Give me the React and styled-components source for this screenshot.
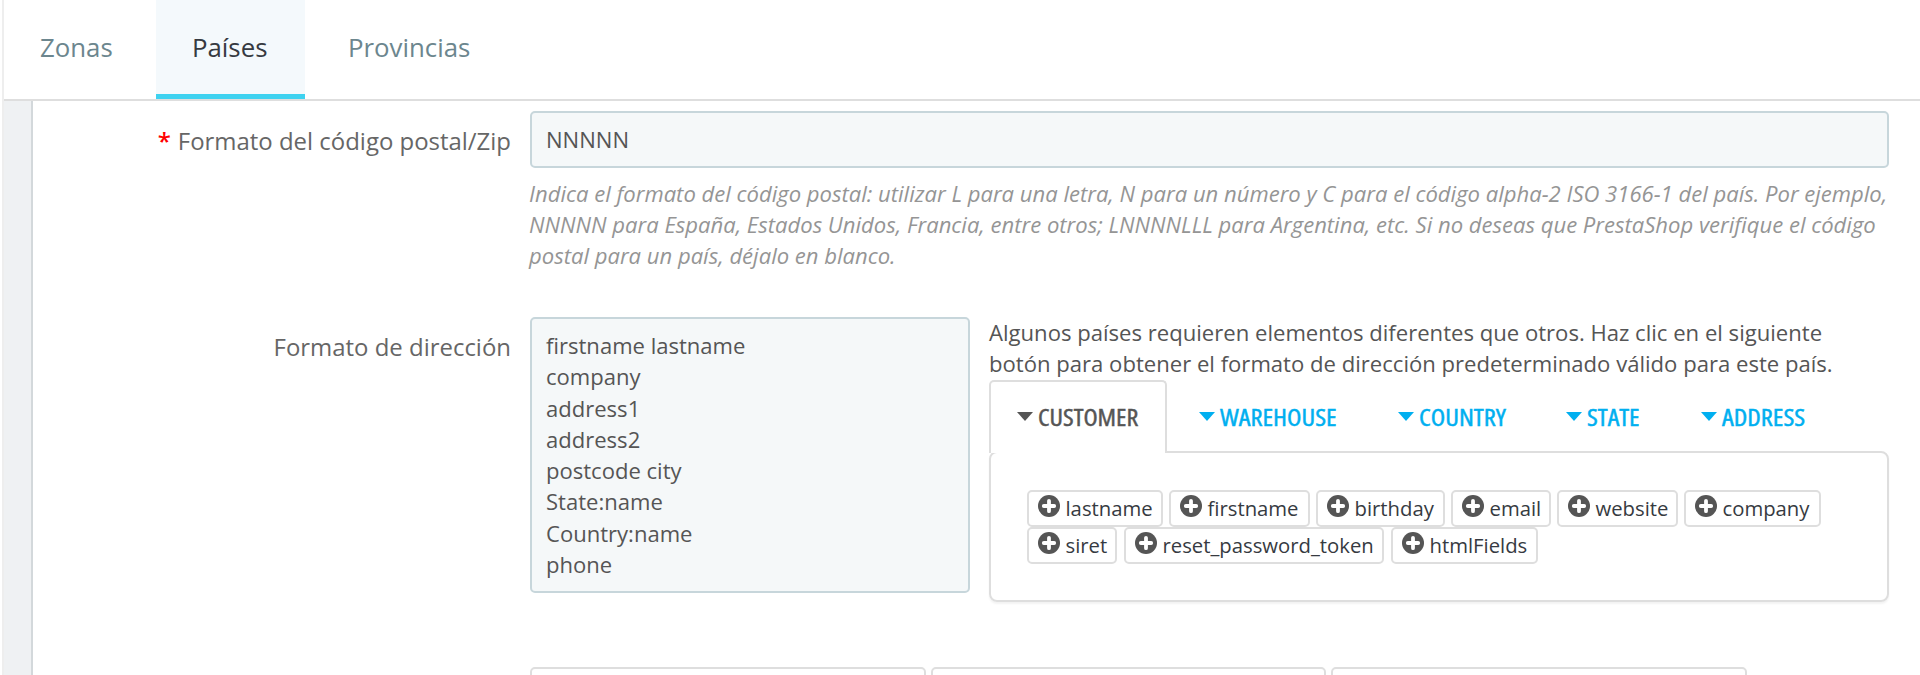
import React from "react";
import styled, { createGlobalStyle } from "styled-components";

const GlobalStyle = createGlobalStyle`
    * {
        box-sizing: border-box;
    }
    body {
        margin: 0;
        background: #fff;
        color: #555;
        font: 22.05px/31.25px "Open Sans", sans-serif;
    }
`

const Page = styled.div`
    display: flex;
    flex-direction: column;
    height: 675px;
    margin-left: 2px;
    border-left: 2px solid #eee;
    overflow: hidden;
`

const HeadTabs = styled.nav`
    display: flex;
    flex: none;
    gap: 7px;
    height: 101px;
    border-bottom: 2px solid #dedede;
`

const HeadTab = styled.a`
    padding: 29px 36px 0;
    width: ${props => props.$width}px;
    font-size: 25.8px;
    line-height: 37px;
    white-space: nowrap;
    color: ${props => props.$active ? "#363a41" : "#6c868e"};
    background: ${props => props.$active ? "#f4f9fc" : "transparent"};
    border-bottom: 5px solid ${props => props.$active ? "#3ed2f0" : "transparent"};
`

const Content = styled.div`
    flex: 1;
    padding-left: 27px;
    background: #eff1f3;
    overflow: hidden;
`

const Form = styled.div`
    height: 100%;
    padding: 10px 31px 0 0;
    background: #fff;
    border-left: 2px solid #d3d8db;
`

const Row = styled.div`
    display: flex;
    height: ${props => props.$height}px;
`

const Label = styled.label`
    width: 497px;
    padding: 13px 19px 0 0;
    font-size: 23.95px;
    line-height: 34px;
    text-align: right;
    white-space: nowrap;
    color: #666;
`

const Required = styled.span`
    margin-right: 7px;
    color: #f00;
    font-weight: 600;
`

const Field = styled.div`
    width: 1359px;
`

const TextInput = styled.input`
    display: block;
    width: 100%;
    height: 57px;
    padding: 0 14px 1px;
    border: 2px solid #c7d6db;
    border-radius: 5px;
    background: #f5f8f9;
    color: #555;
    font: inherit;
    outline: none;
`

const Help = styled.p`
    margin: 9.5px 0 0 -1px;
    font-style: italic;
    white-space: nowrap;
    color: #959595;
`

const AddressFields = styled.div`
    display: flex;
    gap: 19px;
    width: 1359px;
`

const TextArea = styled.textarea`
    display: block;
    width: 440px;
    height: 276px;
    padding: 11px 14px;
    border: 2px solid #c7d6db;
    border-radius: 5px;
    background: #f5f8f9;
    color: #555;
    font: inherit;
    resize: none;
    outline: none;
    overflow: hidden;
`

const Layout = styled.div`
    width: 900px;
`

const Intro = styled.p`
    margin: 0;
    font-size: 22.1px;
    white-space: nowrap;
`

const ObjectTabs = styled.div`
    display: flex;
    gap: 4px;
    height: 73px;
    margin-bottom: -2px;
`

const ObjectTab = styled.a`
    display: flex;
    align-items: center;
    width: ${props => props.$width}px;
    padding: 0 0 1px 26px;
    border: 2px solid ${props => props.$active ? "#dedede" : "transparent"};
    border-bottom: 0;
    border-radius: 5px 5px 0 0;
    background: ${props => props.$active ? "#fff" : "transparent"};
    color: ${props => props.$active ? "#555" : "#00aff0"};
    position: relative;
`

const Caret = styled.span`
    flex: none;
    width: 16px;
    height: 9px;
    margin: 0 4.5px 0 0;
    background: currentColor;
    clip-path: polygon(0 0, 100% 0, 50% 100%);
`

const TabText = styled.span`
    font: 500 24.3px/30px "Open Sans", sans-serif;
    font-stretch: 75%;
    -webkit-text-stroke: 0.45px currentColor;
    transform: scaleX(${props => props.$stretch});
    transform-origin: left;
    white-space: nowrap;
`

const TabPanel = styled.div`
    display: flex;
    flex-direction: column;
    height: 151px;
    padding: 37px 36px 0;
    border: 2px solid #dedede;
    border-radius: 8px;
    box-shadow: 0 2px 2px rgba(0, 0, 0, 0.05);
`

const ChipRow = styled.div`
    display: flex;
    gap: ${props => props.$gap}px;
    height: 37px;
`

const Chip = styled.button`
    display: flex;
    align-items: center;
    width: ${props => props.$width}px;
    height: 37px;
    padding: 0 0 0 9px;
    border: 2px solid #dedede;
    border-radius: 5px;
    background: #fff;
    color: #363a41;
    font: 20.3px/30px "Open Sans", sans-serif;
    white-space: nowrap;
`

const PlusSvg = styled.svg`
    flex: none;
    width: 22px;
    height: 22px;
    margin: -4px 5.5px 0 0;
`

const Boxes = styled.div`
    display: flex;
    gap: 5px;
`

const Box = styled.div`
    width: ${props => props.$width}px;
    height: 60px;
    border: 2px solid #dedede;
    border-radius: 5px;
`

const PlusIcon = () => (
    <PlusSvg viewBox="0 0 22 22">
        <circle cx="11" cy="11" r="11" fill="#555" />
        <path d="M11 5.8v10.4M5.8 11h10.4" stroke="#fff" strokeWidth="3.8" strokeLinecap="round" />
    </PlusSvg>
)

const objectTabs = [
    { name: "CUSTOMER", width: 178, stretch: 1.07 },
    { name: "WAREHOUSE", width: 195, stretch: 1.088 },
    { name: "COUNTRY", width: 164, stretch: 1.09 },
    { name: "STATE", width: 131, stretch: 1.08 },
    { name: "ADDRESS", width: 160, stretch: 1.09 },
];

const chipRows = [
    {
        gap: 6,
        chips: [["lastname", 136], ["firstname", 141], ["birthday", 129], ["email", 100], ["website", 121], ["company", 137]],
    },
    {
        gap: 7,
        chips: [["siret", 90], ["reset_password_token", 260], ["htmlFields", 147]],
    },
];

const addressFormat = [
    "firstname lastname",
    "company",
    "address1",
    "address2",
    "postcode city",
    "State:name",
    "Country:name",
    "phone",
].join("\n");

class App extends React.Component
{
    renderChips() {
        return chipRows.map((row, index) => (
            <ChipRow key={index} $gap={row.gap}>
                {row.chips.map(([name, width]) => (
                    <Chip key={name} $width={width}><PlusIcon />{name}</Chip>
                ))}
            </ChipRow>
        ));
    }

    render() {
        return (
            <Page>
                <GlobalStyle />
                <HeadTabs>
                    <HeadTab $width={145}>Zonas</HeadTab>
                    <HeadTab $width={149} $active>Países</HeadTab>
                    <HeadTab $width={196}>Provincias</HeadTab>
                </HeadTabs>
                <Content>
                    <Form>
                        <Row $height={206}>
                            <Label><Required>*</Required>Formato del código postal/Zip</Label>
                            <Field>
                                <TextInput defaultValue="NNNNN" />
                                <Help>
                                    Indica el formato del código postal: utilizar L para una letra, N para un número y C para el código alpha-2 ISO 3166-1 del país. Por ejemplo,<br />
                                    NNNNN para España, Estados Unidos, Francia, entre otros; LNNNNLLL para Argentina, etc. Si no deseas que PrestaShop verifique el código<br />
                                    postal para un país, déjalo en blanco.
                                </Help>
                            </Field>
                        </Row>
                        <Row $height={350}>
                            <Label>Formato de dirección</Label>
                            <AddressFields>
                                <TextArea defaultValue={addressFormat} />
                                <Layout>
                                    <Intro>
                                        Algunos países requieren elementos diferentes que otros. Haz clic en el siguiente<br />
                                        botón para obtener el formato de dirección predeterminado válido para este país.
                                    </Intro>
                                    <ObjectTabs>
                                        {objectTabs.map((tab, index) => (
                                            <ObjectTab key={tab.name} $width={tab.width} $active={index === 0}>
                                                <Caret />
                                                <TabText $stretch={tab.stretch}>{tab.name}</TabText>
                                            </ObjectTab>
                                        ))}
                                    </ObjectTabs>
                                    <TabPanel>{this.renderChips()}</TabPanel>
                                </Layout>
                            </AddressFields>
                        </Row>
                        <Row $height={60}>
                            <Label />
                            <Boxes>
                                <Box $width={396} />
                                <Box $width={395} />
                                <Box $width={416} />
                            </Boxes>
                        </Row>
                    </Form>
                </Content>
            </Page>
        );
    }
}

export default App;
